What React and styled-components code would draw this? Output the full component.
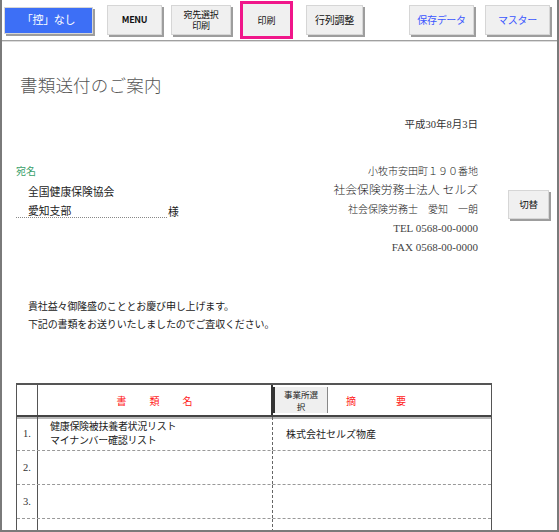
import React from "react";
import styled, { createGlobalStyle } from "styled-components";

const GlobalStyle = createGlobalStyle`
  html, body {
    margin: 0;
    padding: 0;
    background: #ffffff;
  }
  body {
    font-family: "Noto Sans CJK JP", "Liberation Sans", sans-serif;
    color: #222;
  }
`;

const Frame = styled.div`
  width: 559px;
  height: 532px;
  box-sizing: border-box;
  border: 2px solid #7a7a7a;
  border-top: none;
  overflow: hidden;
  background: #fff;
`;

const Toolbar = styled.div`
  height: 40px;
  display: flex;
  align-items: center;
  border-bottom: 1px solid #a0a0a0;
  box-shadow: 0 1px 0 #dcdcdc;
`;

const Button = styled.button`
  width: ${(p) => p.$w}px;
  height: ${(p) => p.$h || 30}px;
  margin-left: ${(p) => p.$ml || 0}px;
  padding: 0;
  box-sizing: border-box;
  border: 1px solid #d6d6d6;
  background: ${(p) => (p.$blue ? "#3d6ff6" : "#f0f0f0")};
  color: ${(p) => (p.$blue ? "#ffffff" : p.$link ? "#3c57ff" : "#111")};
  box-shadow: 2px 2px 0 #9d9d9d;
  font-family: "Noto Sans CJK JP", sans-serif;
  font-size: ${(p) => p.$fs || 9}px;
  font-weight: ${(p) => (p.$bold ? 700 : 400)};
  line-height: 1.25;
  letter-spacing: -0.3px;
  display: flex;
  align-items: center;
  justify-content: center;
  text-align: center;
  white-space: pre-line;
  cursor: pointer;
`;

const Highlight = styled.div`
  width: 53px;
  height: 38px;
  margin-left: ${(p) => p.$ml}px;
  box-sizing: border-box;
  border: 3px solid #f0168a;
  background: #f0f0f0;
  display: flex;
  align-items: center;
  justify-content: center;
  font-size: 9px;
  color: #111;
`;

const Sheet = styled.div`
  padding: 0 8px 0 14px;
`;

const Title = styled.h1`
  margin: 33px 0 0 4px;
  font-family: "Noto Sans CJK JP", serif;
  font-weight: 300;
  font-size: 17.5px;
  line-height: 22px;
  letter-spacing: 0.2px;
  color: #555;
`;

const DateLine = styled.div`
  margin-top: 22px;
  padding-right: 71px;
  text-align: right;
  font-family: "Liberation Serif", "Noto Sans CJK JP", serif;
  font-size: 10.5px;
  line-height: 14px;
  color: #333;
`;

const AddressArea = styled.div`
  margin-top: 30px;
  display: flex;
  align-items: flex-start;
`;

const Recipient = styled.div`
  flex: 1;
`;

const Label = styled.div`
  color: #3aa06a;
  font-size: 10px;
  line-height: 17px;
  padding-bottom: 3px;
`;

const RecipientLine = styled.div`
  padding-left: 12px;
  font-size: 10.8px;
  line-height: 19px;
`;

const NameRow = styled.div`
  height: 19px;
  display: flex;
  align-items: center;
`;

const NameField = styled.div`
  width: 139px;
  padding: 1px 0 0 12px;
  font-size: 10.8px;
  line-height: 13px;
  border-bottom: 1px dotted #888;
`;

const Sama = styled.span`
  margin: 1px 0 0 1px;
  font-size: 10.8px;
  line-height: 14px;
`;

const Sender = styled.div`
  text-align: right;
  font-family: "Liberation Serif", "Noto Sans CJK JP", serif;
  font-weight: 300;
  color: #222;
`;

const SenderLine = styled.div`
  font-size: ${(p) => p.$fs || 10}px;
  line-height: ${(p) => p.$lh || 19}px;
  font-weight: ${(p) => (p.$latin ? 400 : 300)};
  color: ${(p) => (p.$latin ? "#444" : "#222")};
`;

const SideButton = styled(Button)`
  margin: 28px 0 0 30px;
`;

const Paragraph = styled.p`
  margin: ${(p) => p.$mt}px 0 0 12px;
  font-size: 10px;
  line-height: 14px;
  letter-spacing: -0.15px;
  color: #222;
`;

const Table = styled.div`
  margin-top: 52px;
  width: 476px;
  border: 1px solid #555;
  border-top: 2px solid #555;
  border-bottom: none;
  box-sizing: border-box;
`;

const HeaderRow = styled.div`
  display: grid;
  grid-template-columns: 21px 235px 55px 1fr;
  height: 30px;
  border-bottom: 2px solid #444;
  box-shadow: 0 2px 0 #b8b8b8;
`;

const Cell = styled.div`
  border-right: ${(p) => p.$border || "none"};
  display: flex;
  align-items: center;
  justify-content: ${(p) => p.$justify || "flex-start"};
  gap: ${(p) => p.$gap || 0}px;
  padding-left: ${(p) => p.$pl || 0}px;
  font-size: 10px;
  line-height: 13px;
  min-width: 0;
`;

const RedWord = styled.span`
  color: #ff1a1a;
  font-size: 10px;
`;

const SelectButton = styled.div`
  margin: 2px 0;
  background: #efefef;
  border-left: 2px solid #333;
  border-right: 1px solid #888;
  font-size: 8.5px;
  line-height: 12px;
  text-align: center;
  display: flex;
  align-items: center;
  justify-content: center;
  white-space: pre-line;
`;

const BodyRow = styled.div`
  display: grid;
  grid-template-columns: 21px 235px 1fr;
  height: 33px;
  border-bottom: 1px dashed #999;
`;

const Num = styled(Cell)`
  justify-content: center;
  font-family: "Liberation Serif", serif;
  font-size: 10.5px;
  color: #333;
`;

const Docs = styled(Cell)`
  flex-direction: column;
  align-items: flex-start;
  justify-content: flex-start;
  padding: 2px 0 0 12px;
  line-height: 13.5px;
  font-size: 10px;
  letter-spacing: -0.3px;
`;

const rows = [
  { n: "1.", docs: ["健康保険被扶養者状況リスト", "マイナンバー確認リスト"], note: "株式会社セルズ物産" },
  { n: "2.", docs: [], note: "" },
  { n: "3.", docs: [], note: "" },
  { n: "4.", docs: [], note: "" },
];

export default function App() {
  return (
    <>
      <GlobalStyle />
      <Frame>
        <Toolbar>
          <Button $blue $w={89} $h={27} $ml={2} $fs={11}>
            「控」なし
          </Button>
          <Button $w={55} $ml={14} $bold>
            MENU
          </Button>
          <Button $w={60} $ml={9}>
            {"宛先選択\n印刷"}
          </Button>
          <Highlight $ml={9}>印刷</Highlight>
          <Button $w={57} $ml={13} $fs={10}>
            行列調整
          </Button>
          <Button $w={65} $ml={46} $fs={10} $link>
            保存データ
          </Button>
          <Button $w={65} $ml={11} $fs={10} $link>
            マスター
          </Button>
        </Toolbar>

        <Sheet>
          <Title>書類送付のご案内</Title>
          <DateLine>平成30年8月3日</DateLine>

          <AddressArea>
            <Recipient>
              <Label>宛名</Label>
              <RecipientLine>全国健康保険協会</RecipientLine>
              <NameRow>
                <NameField>愛知支部</NameField>
                <Sama>様</Sama>
              </NameRow>
            </Recipient>
            <Sender>
              <SenderLine>小牧市安田町１９０番地</SenderLine>
              <SenderLine $fs={11.8}>社会保険労務士法人 セルズ</SenderLine>
              <SenderLine>社会保険労務士　愛知　一朗</SenderLine>
              <SenderLine $latin $fs={11}>
                TEL 0568-00-0000
              </SenderLine>
              <SenderLine $latin $fs={11} $lh={18}>
                FAX 0568-00-0000
              </SenderLine>
            </Sender>
            <SideButton $w={41} $h={29} $fs={9.5}>
              切替
            </SideButton>
          </AddressArea>

          <Paragraph $mt={43}>貴社益々御隆盛のこととお慶び申し上げます。</Paragraph>
          <Paragraph $mt={4}>下記の書類をお送りいたしましたのでご査収ください。</Paragraph>

          <Table>
            <HeaderRow>
              <Cell $border="1px solid #555" />
              <Cell $border="2px solid #333" $justify="center" $gap={23}>
                <RedWord>書</RedWord>
                <RedWord>類</RedWord>
                <RedWord>名</RedWord>
              </Cell>
              <SelectButton>{"事業所選\n択"}</SelectButton>
              <Cell $pl={18} $gap={40}>
                <RedWord>摘</RedWord>
                <RedWord>要</RedWord>
              </Cell>
            </HeaderRow>
            {rows.map((r) => (
              <BodyRow key={r.n}>
                <Num $border="1px solid #555">{r.n}</Num>
                <Docs $border="1px dashed #666">
                  {r.docs.map((d) => (
                    <span key={d}>{d}</span>
                  ))}
                </Docs>
                <Cell $pl={13}>{r.note}</Cell>
              </BodyRow>
            ))}
          </Table>
        </Sheet>
      </Frame>
    </>
  );
}
